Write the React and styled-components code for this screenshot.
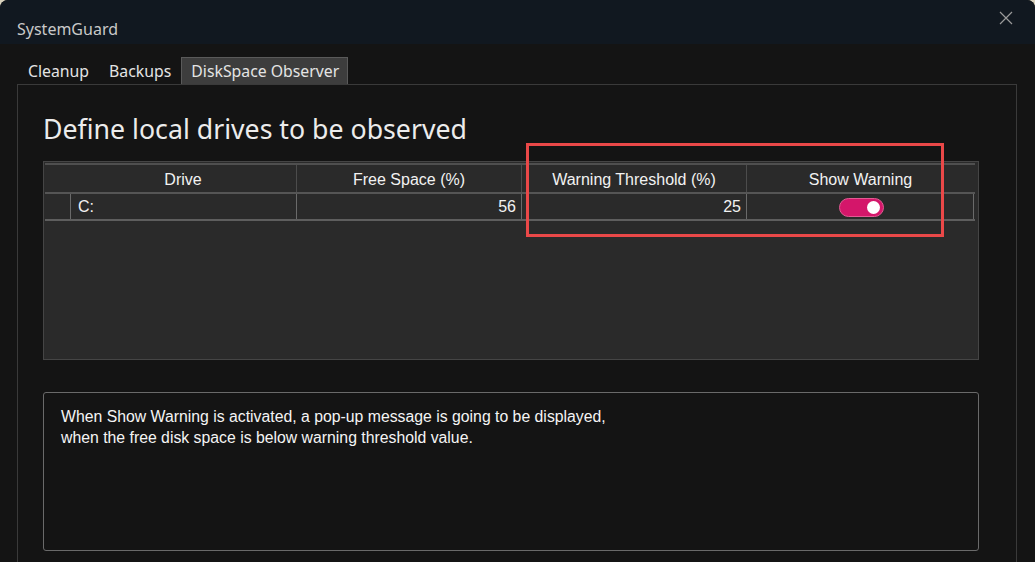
import styled, { createGlobalStyle } from "styled-components";

const Global = createGlobalStyle`
  html, body {
    margin: 0;
    padding: 0;
    background: #d9d2bd;
    overflow: hidden;
  }
  #root {
    width: 1035px;
    height: 562px;
  }
`;

const Window = styled.div`
  width: 1035px;
  height: 562px;
  display: flex;
  flex-direction: column;
  background: #141414;
  border-radius: 8px 8px 0 0;
  overflow: hidden;
  font-family: "Noto Sans", "Open Sans", sans-serif;
  color: #e6e6e6;
`;

const TitleBar = styled.div`
  height: 44px;
  flex: none;
  display: flex;
  align-items: center;
  justify-content: space-between;
  padding: 0 22px 0 17px;
  background: #111820;
  box-sizing: border-box;
`;

const Title = styled.div`
  font-size: 16px;
  color: #c9c9c9;
  padding-top: 13px;
`;

const Close = styled.div`
  width: 14px;
  height: 14px;
  margin-top: -9px;
  color: #9a9a9a;
  display: flex;
`;

const Body = styled.div`
  flex: 1;
  display: flex;
  flex-direction: column;
  padding: 12px 18px 0 17px;
`;

const TabStrip = styled.div`
  display: flex;
  align-items: flex-end;
  height: 28px;
  padding-left: 1px;
`;

const Tab = styled.div`
  height: 28px;
  box-sizing: border-box;
  padding: 0 ${(p) => (p.$active ? "8px 0 9px" : "9px")};
  display: flex;
  align-items: center;
  padding-bottom: 2px;
  font-size: 15.8px;
  color: #e4e4e4;
  margin-bottom: -1px;
  background: ${(p) => (p.$active ? "#3d3d3d" : "transparent")};
  border: 1px solid ${(p) => (p.$active ? "#5a5a5a" : "transparent")};
  border-bottom: none;
`;

const Panel = styled.div`
  flex: 1;
  border: 1px solid #3a3a3a;
  border-bottom: none;
  padding: 25px 37px 0 25px;
  display: flex;
  flex-direction: column;
  position: relative;
`;

const Heading = styled.h1`
  margin: 0;
  font-weight: 400;
  font-size: 26.7px;
  line-height: 37px;
  color: #ececec;
`;

const TableBox = styled.div`
  margin-top: 14px;
  height: 199px;
  box-sizing: border-box;
  background: #2a2a2a;
  border: 1px solid #454545;
  padding: 1px 3px 0 1px;
  font-family: "Liberation Sans", Arial, sans-serif;
  font-size: 16px;
  color: #f2f2f2;
`;

const Row = styled.div`
  display: grid;
  grid-template-columns: 25px 226px 225px 225px 228px;
  height: ${(p) => p.$h}px;
  box-sizing: border-box;
  border-top: ${(p) => (p.$header ? "2px solid #4f4f4f" : "none")};
  border-bottom: 2px solid ${(p) => (p.$header ? "#555" : "#5e5e5e")};
`;

const Corner = styled.div``;

const HeadCell = styled.div`
  display: flex;
  align-items: center;
  justify-content: center;
  border-left: 1px solid #4c4c4c;
  padding-top: 3px;
  &:nth-child(2) {
    border-left: none;
  }
`;

const Cell = styled.div`
  display: flex;
  align-items: center;
  justify-content: ${(p) => p.$align || "flex-start"};
  padding: 1px 5px 0 7px;
  border-left: 1px solid #6a6a6a;
  &:last-child {
    border-right: 1px solid #6a6a6a;
  }
`;

const Toggle = styled.div`
  width: 45px;
  height: 19px;
  box-sizing: border-box;
  border-radius: 10px;
  background: #d4166a;
  border: 1px solid #e25a93;
  display: flex;
  align-items: center;
  justify-content: flex-end;
  padding-right: 3px;
`;

const Knob = styled.div`
  width: 13px;
  height: 13px;
  border-radius: 50%;
  background: #ffffff;
`;

const InfoBox = styled.div`
  margin-top: 32px;
  height: 159px;
  box-sizing: border-box;
  border: 1px solid #6a6a6a;
  border-radius: 3px;
  padding: 13px 17px;
  font-family: "Liberation Sans", Arial, sans-serif;
  font-size: 15.8px;
  line-height: 21px;
  color: #f4f4f4;
`;

const Highlight = styled.div`
  position: absolute;
  left: 508px;
  top: 58px;
  width: 418px;
  height: 94px;
  box-sizing: border-box;
  border: 3px solid #ea4848;
  pointer-events: none;
`;

const columns = ["Drive", "Free Space (%)", "Warning Threshold (%)", "Show Warning"];

export default function App() {
  return (
    <>
      <Global />
      <Window>
        <TitleBar>
          <Title>SystemGuard</Title>
          <Close>
            <svg width="14" height="14" viewBox="0 0 14 14">
              <path d="M1 1L13 13M13 1L1 13" stroke="currentColor" strokeWidth="1.2" />
            </svg>
          </Close>
        </TitleBar>
        <Body>
          <TabStrip>
            <Tab>Cleanup</Tab>
            <Tab>Backups</Tab>
            <Tab $active>DiskSpace Observer</Tab>
          </TabStrip>
          <Panel>
            <Heading>Define local drives to be observed</Heading>
            <TableBox>
              <Row $header $h={31}>
                <Corner />
                {columns.map((c) => (
                  <HeadCell key={c}>{c}</HeadCell>
                ))}
              </Row>
              <Row $h={27}>
                <Corner />
                <Cell>C:</Cell>
                <Cell $align="flex-end">56</Cell>
                <Cell $align="flex-end">25</Cell>
                <Cell $align="center">
                  <Toggle>
                    <Knob />
                  </Toggle>
                </Cell>
              </Row>
            </TableBox>
            <InfoBox>
              When Show Warning is activated, a pop-up message is going to be displayed,
              <br />
              when the free disk space is below warning threshold value.
            </InfoBox>
            <Highlight />
          </Panel>
        </Body>
      </Window>
    </>
  );
}
